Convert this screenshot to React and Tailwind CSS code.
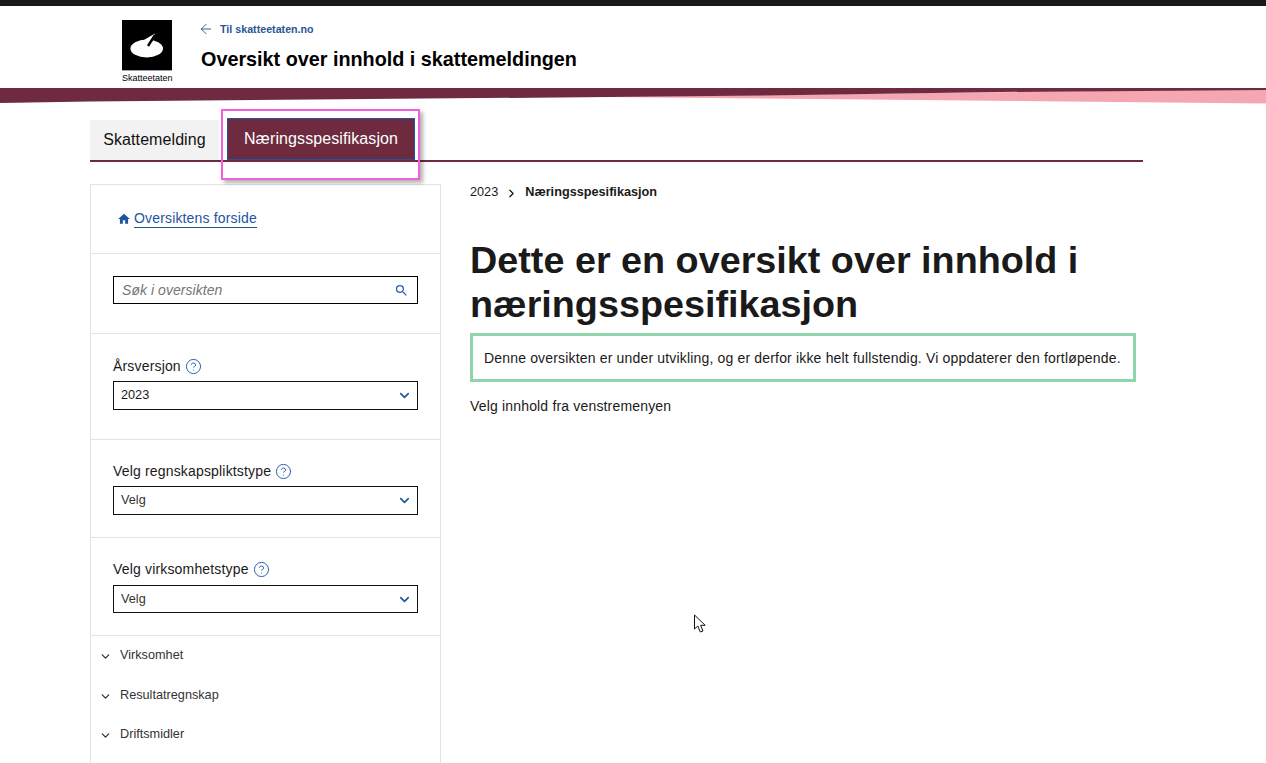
import React from "react";
import { ArrowLeft, ChevronDown, ChevronRight, CircleHelp } from "lucide-react";

const FONT = { fontFamily: '"Liberation Sans", Arial, sans-serif' };
const MENU = ["Virksomhet", "Resultatregnskap", "Driftsmidler"];

function Logo() {
  return (
    <div className="w-[50px] shrink-0">
      <div className="h-[51px] bg-black border-b border-gray-400">
        <svg className="block" width="50" height="50" viewBox="0 0 50 50">
          <ellipse cx="24.7" cy="28.5" rx="16.3" ry="9" fill="#fff" />
          <polygon points="22,20 33,13.5 31,20" fill="#fff" />
          <line x1="33" y1="15" x2="26" y2="26" stroke="#000" strokeWidth="2.4" />
        </svg>
      </div>
      <div className="text-[9px] leading-[11px] mt-[2px] text-black text-center whitespace-nowrap">Skatteetaten</div>
    </div>
  );
}

function Band() {
  return (
    <svg className="block w-full h-[17px]" viewBox="0 0 1266 17" preserveAspectRatio="none">
      <polygon points="600,9 1266,1 1266,15.5" fill="#f4a7b3" />
      <polygon points="0,0 1266,0 1266,2 1000,4 800,7 610,9 90,13.5 0,15" fill="#6e2b3f" />
    </svg>
  );
}

function HelpIcon() {
  return <CircleHelp size={17} strokeWidth={1.4} className="text-[#2a5fa8]" />;
}

function Field({ label, value, muted, className, boxClassName }) {
  return (
    <div className={`border-b border-[#e3e3e3] px-[22px] ${className}`}>
      <div className="flex items-center gap-[4px] text-[14px] tracking-[0.17px] leading-[18px] text-[#1a1a1a]">
        {label}
        <HelpIcon />
      </div>
      <div className={`border border-[#111] flex items-center justify-between pl-[7px] pr-[5px] text-[12.7px] ${muted ? "text-[#333]" : "text-[#1a1a1a]"} ${boxClassName}`}>
        {value}
        <ChevronDown size={15} strokeWidth={2.6} className="text-[#1f55a0]" />
      </div>
    </div>
  );
}

function Sidebar() {
  return (
    <aside className="w-[351px] shrink-0 border-x border-t border-[#e3e3e3] h-[579px] overflow-hidden">
      <div className="h-[69px] border-b border-[#e3e3e3] flex items-start pt-[24px] pl-[26px]">
        <svg width="14" height="14" viewBox="0 0 24 24" className="mt-[3px] mr-[3px]" fill="#1f55a0">
          <path d="M10 20v-6h4v6h5v-8h3L12 3 2 12h3v8z" />
        </svg>
        <a className="text-[14px] tracking-[0.16px] leading-[18px] text-[#1f55a0] border-b border-[#1f55a0]">Oversiktens forside</a>
      </div>
      <div className="h-[80px] border-b border-[#e3e3e3] px-[22px] pt-[22px]">
        <div className="h-[28px] border border-black flex items-center justify-between pl-[8px] pr-[8px]">
          <span className="italic text-[14px] tracking-[0.05px] text-[#757575]">Søk i oversikten</span>
          <svg width="15" height="15" viewBox="0 0 24 24" fill="#2a5fa8">
            <path d="M15.5 14h-.79l-.28-.27A6.47 6.47 0 0 0 16 9.5 6.5 6.5 0 1 0 9.5 16c1.61 0 3.09-.59 4.23-1.57l.27.28v.79l5 4.99L20.49 19l-4.99-5zm-6 0C7.01 14 5 11.99 5 9.5S7.01 5 9.5 5 14 7.01 14 9.5 11.99 14 9.5 14z" />
          </svg>
        </div>
      </div>
      <Field label="Årsversjon" value="2023" className="h-[106px] pt-[23px]" boxClassName="mt-[6px] h-[29px]" />
      <Field label="Velg regnskapspliktstype" value="Velg" muted className="h-[98px] pt-[22px]" boxClassName="mt-[6px] h-[29px]" />
      <Field label="Velg virksomhetstype" value="Velg" muted className="h-[98px] pt-[22px]" boxClassName="mt-[7px] h-[28px] pt-[1px]" />
      <div className="pt-[9px] pl-[9px]">
        {MENU.map((item) => (
          <div key={item} className="h-[39.5px] flex items-start text-[12.7px] leading-[20px] text-[#333]">
            <ChevronDown size={13} strokeWidth={2.4} className="text-[#333] mt-[5px] mr-[8px] -ml-[1px]" />
            {item}
          </div>
        ))}
      </div>
    </aside>
  );
}

function Content() {
  return (
    <main className="ml-[29px] w-[666px] text-[#1a1a1a]">
      <div className="flex items-center h-[16px] mt-[1px] text-[12.7px]">
        2023
        <ChevronRight size={13} strokeWidth={2.4} className="mx-[7px]" />
        <span className="font-bold">Næringsspesifikasjon</span>
      </div>
      <h1 className="mt-[37px] text-[37.75px] leading-[44px] font-bold">
        Dette er en oversikt over innhold i næringsspesifikasjon
      </h1>
      <div className="mt-[7px] h-[49px] border-[3px] border-[#8fd4ab] flex items-center pl-[11px] pt-[1px] text-[14px] tracking-[0.17px] whitespace-nowrap">
        Denne oversikten er under utvikling, og er derfor ikke helt fullstendig. Vi oppdaterer den fortløpende.
      </div>
      <p className="mt-[15px] text-[14px] tracking-[0.17px] leading-[18px]">Velg innhold fra venstremenyen</p>
    </main>
  );
}

export default function App() {
  return (
    <div className="relative h-[763px] w-full overflow-hidden bg-white" style={FONT}>
      <div className="h-[6px] bg-[#1a1a1a]" />
      <header className="h-[82px] flex pl-[122px] pt-[14px]">
        <Logo />
        <div className="ml-[26px]">
          <div className="flex items-center h-[18px] text-[10.7px] font-bold text-[#2a5596]">
            <ArrowLeft size={16} strokeWidth={1.4} className="mr-[6px]" />
            Til skatteetaten.no
          </div>
          <div className="mt-[9px] ml-[3px] text-[19.8px] leading-[24px] font-bold text-black">
            Oversikt over innhold i skattemeldingen
          </div>
        </div>
      </header>
      <Band />

      <div className="ml-[90px] w-[1053px] mt-[13px] h-[44px] flex items-end border-b-2 border-[#6e2b3f]">
        <div className="w-[129px] h-[40px] bg-[#f2f2f2] flex items-center justify-center text-[16px] tracking-[0.08px] text-[#111]">Skattemelding</div>
        <div className="ml-[8px] w-[188px] h-[42px] bg-[#6e2b3f] border border-[#1f55a0] flex items-center justify-center text-[16px] tracking-[0.1px] text-white">Næringsspesifikasjon</div>
      </div>

      <div className="ml-[90px] mt-[22px] flex">
        <Sidebar />
        <Content />
      </div>

      {/* annotation over the active tab */}
      <div className="absolute left-[221px] top-[109px] w-[199px] h-[71px] border-[2px] border-[#f55fd5] shadow-[3px_3px_4px_rgba(0,0,0,0.3)]" />
      <svg className="absolute left-[693px] top-[614px]" width="15" height="20" viewBox="0 0 15 20">
        <path d="M1.5 1 V15 L4.8 12 L7.3 18 L10 17 L7.6 11.3 H12.2 Z" fill="#fff" stroke="#111" strokeWidth="1" />
      </svg>
    </div>
  );
}
